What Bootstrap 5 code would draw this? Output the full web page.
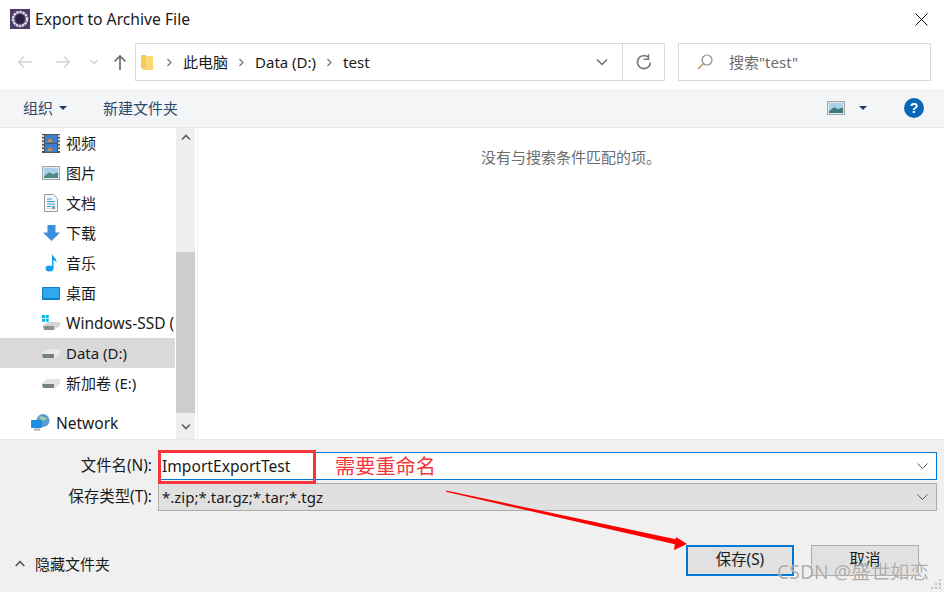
<!doctype html>
<html lang="zh"><head><meta charset="utf-8"><title>Export to Archive File</title>
<link href="https://cdn.jsdelivr.net/npm/bootstrap@5.3.0/dist/css/bootstrap.min.css" rel="stylesheet">
<style>
html,body{margin:0;background:#fff;overflow:hidden}
body{width:944px;height:592px;font:15px/20px "Noto Sans","Noto Sans CJK SC",sans-serif;color:#1a1a1a;position:relative}
svg{display:block;flex:none}
.titlebar{height:43px;padding:9px 16px 0 10px;font-size:15.7px}
.titlebar .ttl{margin-left:5px}
.addr{height:46px;padding:0 13px 8px 17px}
.navs{width:118px;color:#c9c9c9}
.nv-fwd{margin-left:24px}.nv-dn{margin-left:19px}.nv-up{margin-left:16px}
.crumb{width:530px;height:38px;border:1px solid #d9d9d9}
.crumb .cr-main{flex:1;padding-left:5px;gap:10px}
.crumb .cell{width:42px;height:100%;border-left:1px solid #d9d9d9}
.crumb .dd{width:41px;height:100%}
.fold-gap{margin-left:3px}
.searchbox{width:253px;height:38px;border:1px solid #d9d9d9;margin-left:13px;padding-left:18px;gap:16px;color:#6d6d6d}
.tools{height:39px;background:#f4f5f7;padding:0 20px 0 23px;color:#2c4a6e;border-bottom:1px solid #e6e8ec}
.tools .nw{margin-left:36px}
.tri{width:0;height:0;border:4px solid transparent;border-top:4px solid #1f3c64;border-bottom:0}
.tri-a{margin-left:6px}.tri-b{margin-left:14px}.help{margin-left:37px}
.middle{height:311px}
.side{width:176px;overflow:hidden}
.side-row{height:30px;gap:5px;padding-left:41px;white-space:nowrap;overflow:hidden}
.side-row.on{background:#d9d9d9;width:175px}
.side-row.net{padding-left:31px;margin-top:10px;gap:6px;height:30px}
.ic{width:20px;display:flex;justify-content:center}
.net-t{font-size:15.5px}
.win-t{font-size:15.5px}
.sbar{width:19px;background:#efefef}
.sb-btn{height:18px}
.sb-thumb{height:161px;background:#cdcdcd;margin-top:106px}
.main-pane{flex:1;margin-left:2px;border-left:1px solid #eceef1;text-align:center;color:#6d6d6d;padding-top:19px}
.bottom{height:153px;background:#f0f0f0;padding-top:11px;position:relative;border-top:1px solid #e8e8e8}
.frow{height:29px;padding-right:7px}
.flab{width:158px;text-align:right;padding-right:6px;font-size:15.4px}
.fin{flex:1;height:28px;padding:0 8px 0 3px;border:1px solid #0078d7;background:#fff}
.fin-name{font-size:15.6px}
.frow.second{margin-top:2px}
.fin.sel{background:#e0e0e0;border-color:#adadad}
.acts{margin-top:34px;padding:0 25px 0 15px}
.hide{gap:10px;margin-top:6px}
.dbtn{width:108px;height:31px;background:#e1e1e1;border:1px solid #adadad;display:flex;align-items:center;justify-content:center;padding-bottom:2px;font-size:15.400px}
.dbtn.pri{border:2px solid #0078d7}
.dbtn.cancel{margin-left:17px}
.redbox{position:absolute;left:158px;top:450px;width:158px;height:34px;border:3px solid #f6363c}
.redtxt{position:absolute;left:335px;top:453px;color:#f6363c;font-size:20.2px;line-height:26px;font-family:"Noto Sans CJK SC",sans-serif}
.arrow{position:absolute;left:440px;top:485px}
.mark-w{position:absolute;left:777px;top:560px;font:19.400px/24px "Noto Sans","Noto Sans CJK SC",sans-serif;color:rgba(120,120,120,.62);text-shadow:0 0 1px #fff;white-space:nowrap}
.grip{position:absolute;right:2px;bottom:2px}
</style></head><body>
<div class="titlebar d-flex align-items-start">
<svg width="20" height="20" viewBox="0 0 20 20"><rect width="20" height="20" fill="#4b3a6b"/><circle cx="10" cy="10" r="7" fill="none" stroke="#d8d8de" stroke-width="2.6" stroke-dasharray="2.6 .6"/><circle cx="10" cy="10" r="4.5" fill="#2a2440"/></svg>
<span class="ttl">Export to Archive File</span>
<svg class="ms-auto mt-1" width="13" height="13" viewBox="0 0 13 13"><path d="M.5.5l12 12M12.500.5l-12 12" stroke="#111" fill="none"/></svg>
</div>
<div class="addr d-flex align-items-center">
<div class="navs d-flex align-items-center">
<svg width="15" height="14" viewBox="0 0 15 14"><path d="M15 7H1.500M7 1.500 1.500 7 7 12.500" fill="none" stroke="#d4d4d4" stroke-width="1.500"/></svg>
<svg class="nv-fwd" width="15" height="14" viewBox="0 0 15 14"><path d="M0 7h13.500M8 1.500 13.500 7 8 12.500" fill="none" stroke="#d4d4d4" stroke-width="1.500"/></svg>
<svg class="nv-dn" width="8" height="6" viewBox="0 0 8 6"><path d="M.5 1 4 4.500 7.500 1" fill="none" stroke="#d0d0d0" stroke-width="1.300"/></svg>
<svg class="nv-up" width="12" height="16" viewBox="0 0 12 16"><path d="M6 16V2M.7 7.300 6 2l5.300 5.300" fill="none" stroke="#6d6d6d" stroke-width="1.700"/></svg>
</div>
<div class="crumb d-flex align-items-center">
<div class="cr-main d-flex align-items-center">
<svg width="12" height="16" viewBox="0 0 12 16"><path d="M0 1h5v1h7v14H3L0 14z" fill="#fbd872"/><path d="M0 1h5v13L0 14z" fill="#f2c14e" opacity=".55"/></svg>
<svg class="fold-gap" width="7" height="9" viewBox="0 0 7 9"><path d="M1.500 1 5 4.500 1.500 8" fill="none" stroke="#777" stroke-width="1.300"/></svg>
<span>此电脑</span>
<svg width="7" height="9" viewBox="0 0 7 9"><path d="M1.500 1 5 4.500 1.500 8" fill="none" stroke="#777" stroke-width="1.300"/></svg>
<span>Data (D:)</span>
<svg width="7" height="9" viewBox="0 0 7 9"><path d="M1.500 1 5 4.500 1.500 8" fill="none" stroke="#777" stroke-width="1.300"/></svg>
<span>test</span>
</div>
<div class="dd d-flex align-items-center justify-content-center"><svg width="12" height="8" viewBox="0 0 12 8"><path d="M1 1.500 6 6.500l5-5" fill="none" stroke="#6d6d6d" stroke-width="1.500"/></svg></div>
<div class="cell d-flex align-items-center justify-content-center"><svg width="16" height="16" viewBox="0 0 16 16"><path d="M14.500 8.500A6.500 6.500 0 1 1 12 3" fill="none" stroke="#7a7a7a" stroke-width="1.700"/><path d="M12.500.3v5H7.500" fill="none" stroke="#7a7a7a" stroke-width="1.500"/></svg></div>
</div>
<div class="searchbox d-flex align-items-center">
<svg width="16" height="16" viewBox="0 0 16 16"><circle cx="10" cy="6" r="5" fill="none" stroke="#8a8a8a" stroke-width="1.200"/><path d="M6.300 9.700 1 15" stroke="#b08a5a" stroke-width="1.300"/></svg>
<span>搜索"test"</span>
</div>
</div>
<div class="tools d-flex align-items-center">
<span>组织</span><span class="tri tri-a"></span><span class="nw">新建文件夹</span>
<svg class="ms-auto" width="18" height="14" viewBox="0 0 18 14"><rect x=".5" y=".5" width="17" height="13" fill="#dce9f0" stroke="#a5a5a5"/><path d="M2 10 7 6l4 2 5-2v6H2z" fill="#3e7a78"/><path d="M2 2h14v4l-5 2-4-2-5 4z" fill="#a9d2ea"/></svg>
<span class="tri tri-b"></span>
<svg class="help" width="20" height="20" viewBox="0 0 20 20"><circle cx="10" cy="10" r="10" fill="#0a66b7"/><text x="10" y="15" text-anchor="middle" font-size="14" font-weight="700" fill="#fff" font-family="Liberation Sans">?</text></svg>
</div>
<div class="middle d-flex">
<div class="side">
<div class="side-row d-flex align-items-center"><span class="ic"><svg width="18" height="19" viewBox="0 0 18 19"><rect width="18" height="19" fill="#555"/><path d="M1 1v17M17 1v17" stroke="#ddd" stroke-width="2" stroke-dasharray="2 1.500"/><rect x="3" y="1" width="12" height="8" fill="#3d7fcf"/><rect x="3" y="10" width="12" height="8" fill="#3d7fcf"/><path d="M5 8l3-4 3 4zM5 17l3-4 3 4z" fill="#d98a2b"/></svg></span><span>视频</span></div>
<div class="side-row d-flex align-items-center"><span class="ic"><svg width="18" height="14" viewBox="0 0 18 14"><rect x=".5" y=".5" width="17" height="13" fill="#dce9f0" stroke="#a5a5a5"/><path d="M2 10 7 6l4 2 5-2v6H2z" fill="#4f8a86"/><path d="M2 2h14v4l-5 2-4-2-5 4z" fill="#a9d2ea"/></svg></span><span>图片</span></div>
<div class="side-row d-flex align-items-center"><span class="ic"><svg width="14" height="18" viewBox="0 0 14 18"><path d="M.5.500h9l4 4v13H.5z" fill="#f7f7f7" stroke="#9b9b9b"/><path d="M3 5h5M3 7.500h8M3 10h8M3 12.500h4" stroke="#3d9ad9"/><path d="M8 12h3v3H8zM3 14.500h4" fill="#7f9db0" stroke="#9fb5c2" stroke-width=".5"/></svg></span><span>文档</span></div>
<div class="side-row d-flex align-items-center"><span class="ic"><svg width="17" height="16" viewBox="0 0 17 16"><path d="M4.500 0h8v7.500H17L8.500 16 0 7.500h4.500z" fill="#3c8fdc"/></svg></span><span>下载</span></div>
<div class="side-row d-flex align-items-center"><span class="ic"><svg width="12" height="18" viewBox="0 0 12 18"><ellipse cx="4.500" cy="14.500" rx="4" ry="3" fill="#12a0ea"/><path d="M7 14V0c1 3 5 4 4.500 9C11 7 9 6 8.500 6v8z" fill="#12a0ea"/></svg></span><span>音乐</span></div>
<div class="side-row d-flex align-items-center"><span class="ic"><svg width="18" height="13" viewBox="0 0 18 13"><rect width="18" height="13" rx="1" fill="#0f7fc9"/><path d="M1 1h16v10H1z" fill="#31a7ee"/></svg></span><span>桌面</span></div>
<div class="side-row d-flex align-items-center"><span class="ic"><svg width="20" height="16" viewBox="0 0 20 16"><path d="M1 0h3v3H1zM4.700 0h3v3h-3zM1 3.700h3v3H1zM4.700 3.700h3v3h-3z" fill="#0cb0ea"/><path d="M2 10l5-3h12v4l-6 4H4z" fill="#d6d6d6"/><path d="M2 11h11v4H3z" fill="#8f8f8f"/><path d="M5 12.500h2" stroke="#35b04b" stroke-width="1.500"/></svg></span><span class="win-t">Windows-SSD (</span></div>
<div class="side-row on d-flex align-items-center"><span class="ic"><svg width="18" height="9" viewBox="0 0 18 9"><path d="M0 4l5-4h13v5l-5 4H1z" fill="#e8e8e8"/><path d="M0 5h12v4H1z" fill="#7d7d7d"/><path d="M3 6.500h2" stroke="#35b04b" stroke-width="1.300"/></svg></span><span>Data (D:)</span></div>
<div class="side-row d-flex align-items-center"><span class="ic"><svg width="18" height="9" viewBox="0 0 18 9"><path d="M0 4l5-4h13v5l-5 4H1z" fill="#e2e2e2"/><path d="M0 5h12v4H1z" fill="#7d7d7d"/><path d="M3 6.500h2" stroke="#35b04b" stroke-width="1.300"/></svg></span><span>新加卷 (E:)</span></div>
<div class="side-row net d-flex align-items-center"><svg width="19" height="18" viewBox="0 0 19 18"><circle cx="12" cy="6.500" r="6.500" fill="#5a9bd4"/><path d="M8 3c3-2 5 1 8 1-1 3-4 3-6 2z" fill="#9fd0a0"/><rect y="6" width="11" height="8" rx="1" fill="#1c8fe0"/><path d="M3 15.500h6" stroke="#aaa" stroke-width="2"/></svg><span class="net-t">Network</span></div>
</div>
<div class="sbar d-flex flex-column">
<div class="sb-btn d-flex align-items-center justify-content-center"><svg width="10" height="7" viewBox="0 0 10 7"><path d="M1 5.500l4-4 4 4" fill="none" stroke="#5f5f5f" stroke-width="1.700"/></svg></div>
<div class="sb-thumb"></div>
<div class="sb-btn mt-auto mb-1 d-flex align-items-center justify-content-center"><svg width="10" height="7" viewBox="0 0 10 7"><path d="M1 1.500l4 4 4-4" fill="none" stroke="#5f5f5f" stroke-width="1.700"/></svg></div>
</div>
<div class="main-pane">没有与搜索条件匹配的项。</div>
</div>
<div class="bottom">
<div class="frow d-flex align-items-center"><div class="flab">文件名(N):</div><div class="fin fin-name d-flex align-items-center justify-content-between"><span>ImportExportTest</span><svg width="11" height="6" viewBox="0 0 11 6"><path d="M.5.500l5 5 5-5" fill="none" stroke="#555"/></svg></div></div>
<div class="frow second d-flex align-items-center"><div class="flab">保存类型(T):</div><div class="fin sel d-flex align-items-center justify-content-between"><span>*.zip;*.tar.gz;*.tar;*.tgz</span><svg width="11" height="6" viewBox="0 0 11 6"><path d="M.5.500l5 5 5-5" fill="none" stroke="#555"/></svg></div></div>
<div class="acts d-flex align-items-center">
<div class="hide d-flex align-items-center"><svg width="10" height="7" viewBox="0 0 10 7"><path d="M.7 6 5 1.700 9.300 6" fill="none" stroke="#555" stroke-width="1.700"/></svg><span>隐藏文件夹</span></div>
<div class="dbtn pri ms-auto">保存(S)</div>
<div class="dbtn cancel">取消</div>
</div>
</div>
<div class="redbox"></div>
<div class="redtxt">需要重命名</div>
<svg class="arrow" width="255" height="70" viewBox="0 0 255 70"><path d="M6 5.500 237 54.500 236 59.500 6 6.700z" fill="#f00"/><path d="M247 59 236 52 234 65z" fill="#f00"/></svg>
<svg class="grip" width="12" height="12" viewBox="0 0 12 12"><path d="M9 1h2v2H9zM5 5h2v2H5zM9 5h2v2H9zM1 9h2v2H1zM5 9h2v2H5zM9 9h2v2H9z" fill="#c4c4c4"/></svg>
<div class="mark-w">CSDN @盛世如恋</div>
</body></html>
